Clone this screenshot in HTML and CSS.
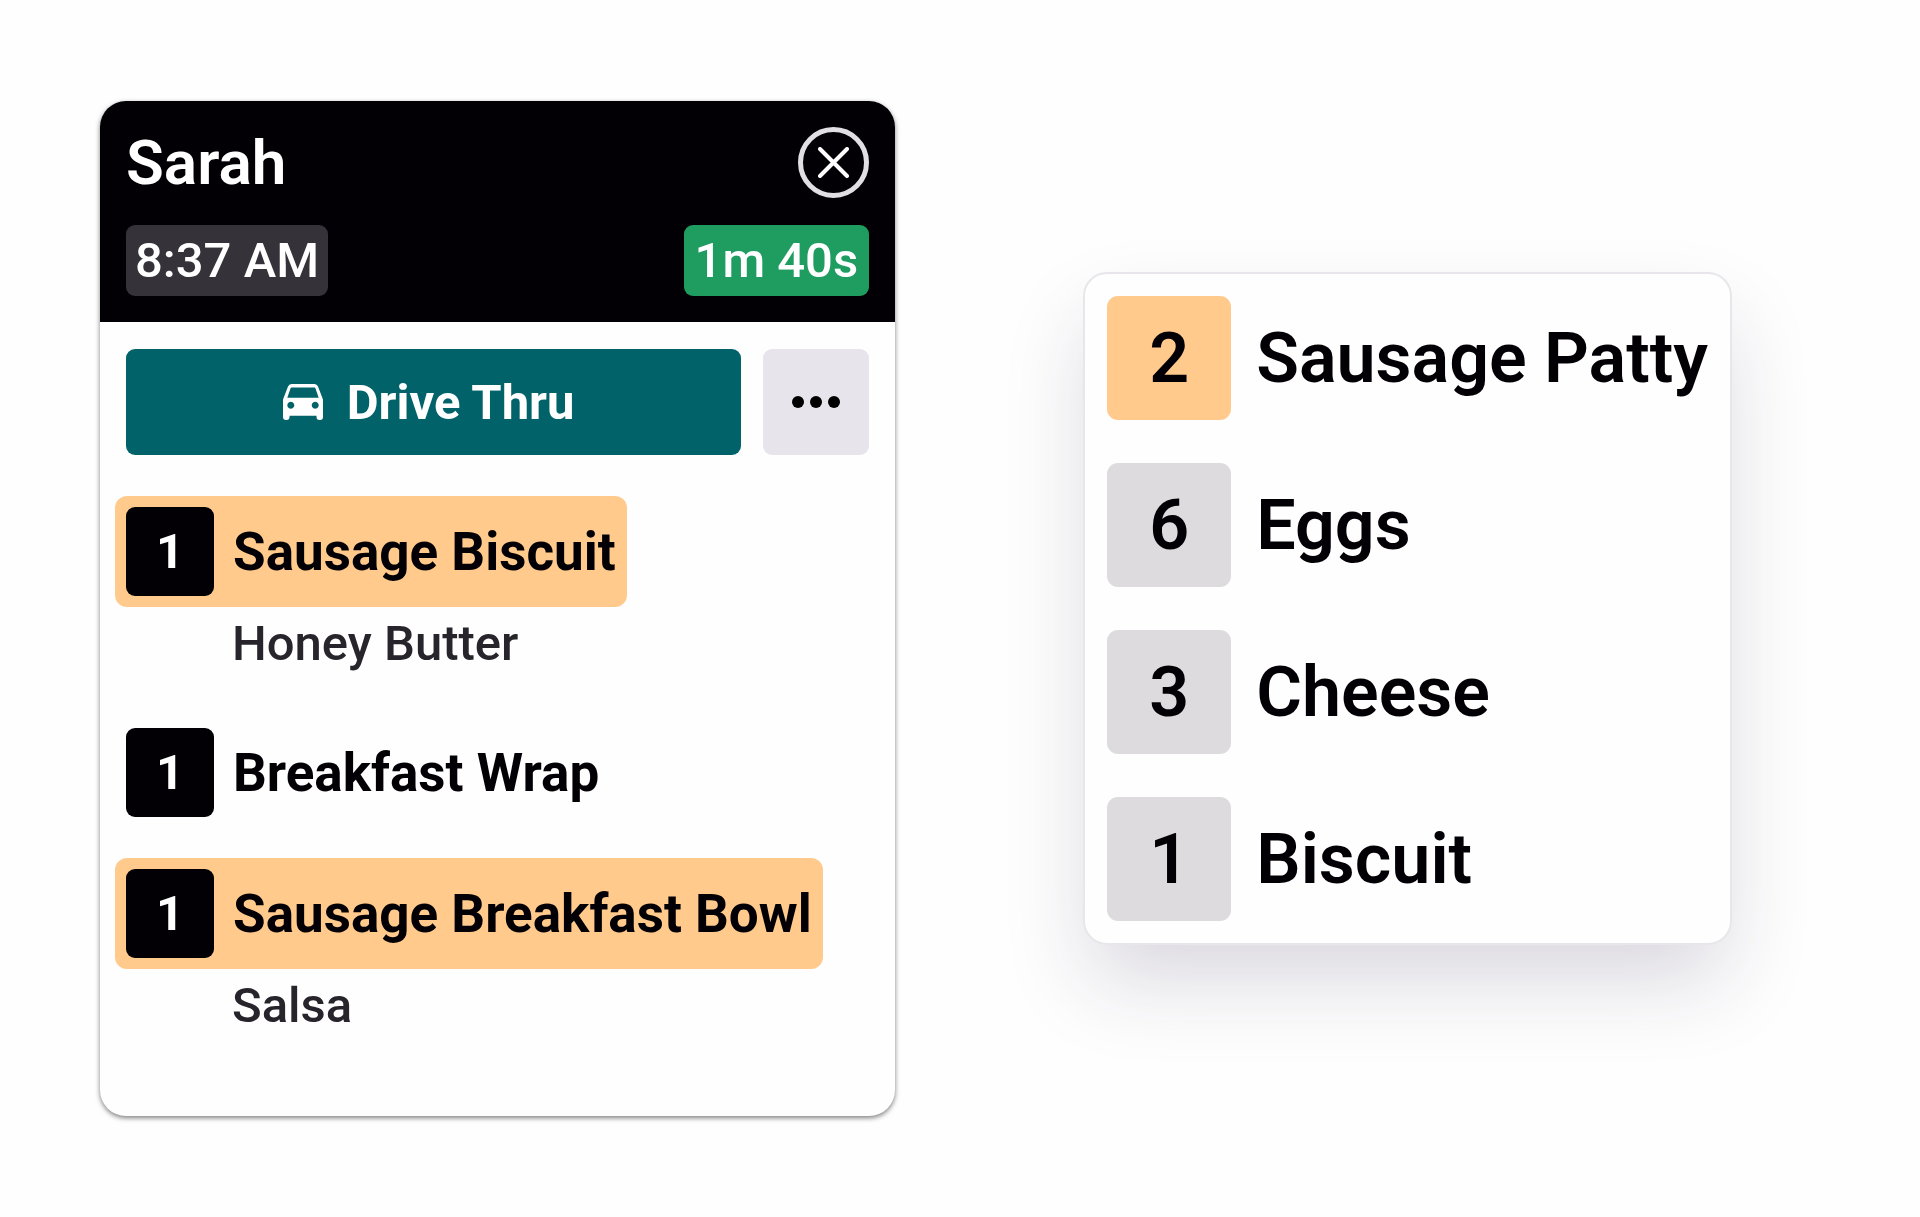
FILE: index.html
```html
<!DOCTYPE html>
<html lang="en">
<head>
    <meta charset="UTF-8">
    <meta name="viewport" content="width=device-width, initial-scale=1.0">
    <title>Kitchen Display</title>
    <link rel="stylesheet" href="styles.css">
</head>
<body>

    <article class="order">
        <header class="order-header">
            <div class="header-row">
                <h1 class="customer">Sarah</h1>
                <button class="close-button" aria-label="Close order">
                    <svg width="31" height="31" viewBox="0 0 31 31">
                        <path d="M2 2 L29 29 M29 2 L2 29" fill="none" stroke="#fff" stroke-width="4" stroke-linecap="round"/>
                    </svg>
                </button>
            </div>
            <div class="header-row">
                <time class="badge">8:37 AM</time>
                <span class="badge timer">1m 40s</span>
            </div>
        </header>

        <div class="actions">
            <button class="type-button">
                <svg width="40" height="36" viewBox="0 0 40 36">
                    <path fill="#fff" fill-rule="evenodd" d="M8.5 0 H31.5 Q34 0 35 2.5 L39.6 14.5 Q40 15.5 40 16.5 V33 A3 3 0 0 1 37 36 H36.5 A3 3 0 0 1 33.5 33 V31.7 H6.5 V33 A3 3 0 0 1 3.5 36 H3 A3 3 0 0 1 0 33 V16.5 Q0 15.5 0.4 14.5 L5 2.5 Q6 0 8.5 0 Z M8.6 3.6 Q7.8 3.6 7.5 4.4 L4.3 13.7 H35.7 L32.5 4.4 Q32.2 3.6 31.4 3.6 Z M7.8 17.8 a3.5 3.5 0 1 0 0.01 0 Z M32.2 17.8 a3.5 3.5 0 1 0 0.01 0 Z"/>
                </svg>
                Drive Thru
            </button>
            <button class="more-button" aria-label="More options">
                <svg width="48" height="12" viewBox="0 0 48 12">
                    <circle cx="6" cy="6" r="6"/>
                    <circle cx="24" cy="6" r="6"/>
                    <circle cx="42" cy="6" r="6"/>
                </svg>
            </button>
        </div>

        <ul class="items">
            <li>
                <div class="item highlight">
                    <span class="count">1</span>
                    <span>Sausage Biscuit</span>
                </div>
                <p class="modifier">Honey Butter</p>
            </li>
            <li>
                <div class="item">
                    <span class="count">1</span>
                    <span>Breakfast Wrap</span>
                </div>
            </li>
            <li>
                <div class="item highlight">
                    <span class="count">1</span>
                    <span>Sausage Breakfast Bowl</span>
                </div>
                <p class="modifier">Salsa</p>
            </li>
        </ul>
    </article>

    <ul class="summary">
        <li class="summary-row">
            <span class="total highlight">2</span>
            <span>Sausage Patty</span>
        </li>
        <li class="summary-row">
            <span class="total">6</span>
            <span>Eggs</span>
        </li>
        <li class="summary-row">
            <span class="total">3</span>
            <span>Cheese</span>
        </li>
        <li class="summary-row">
            <span class="total">1</span>
            <span>Biscuit</span>
        </li>
    </ul>

</body>
</html>
```

FILE: styles.css
```css
* {
    box-sizing: border-box;
}
body {
    font-family: Roboto, "Liberation Sans", sans-serif;
    display: flex;
    align-items: center;
    gap: 188px;
    min-height: 100vh;
    margin: 0;
    padding: 80px 188px 80px 100px;
    background-color: #fefefe;
    color: #020004;
}
ul {
    list-style: none;
    margin: 0;
    padding: 0;
}
button {
    display: flex;
    align-items: center;
    justify-content: center;
    padding: 0;
    border: none;
    font-family: inherit;
    cursor: pointer;
}

/* order ticket */
.order {
    flex: 1;
    padding-bottom: 67px;
    border-radius: 26px;
    background-color: #fefefe;
    box-shadow: 0 2px 5px rgba(0, 0, 0, 0.5);
    overflow: hidden;
}
.order-header {
    display: flex;
    flex-direction: column;
    gap: 27px;
    padding: 26px;
    background-color: #020004;
    color: white;
}
.header-row {
    display: flex;
    align-items: center;
    justify-content: space-between;
}
.customer {
    margin: 0;
    font-size: 62px;
    line-height: 71px;
    font-weight: 600;
}
.close-button {
    width: 71px;
    height: 71px;
    border: 5px solid #e2dfe4;
    border-radius: 50%;
    background-color: transparent;
}
.badge {
    padding: 0 9px;
    border-radius: 9px;
    background-color: #353239;
    font-size: 49px;
    line-height: 71px;
    font-weight: 500;
}
.timer {
    padding: 0 11px;
    background-color: #1f9d61;
}
.actions {
    display: flex;
    gap: 22px;
    padding: 27px 26px 41px;
}
.type-button {
    flex: 1;
    gap: 24px;
    height: 106px;
    padding-right: 10px;
    border-radius: 9px;
    background-color: #016369;
    color: white;
    font-size: 49px;
    font-weight: 700;
}
.more-button {
    width: 106px;
    height: 106px;
    border-radius: 9px;
    background-color: #e7e4eb;
}
.items {
    display: flex;
    flex-direction: column;
    gap: 30px;
    padding: 0 15px;
}
.item {
    display: flex;
    align-items: center;
    gap: 19px;
    width: fit-content;
    padding: 11px;
    border-radius: 12px;
    font-size: 53px;
    font-weight: 700;
}
.highlight {
    background-color: #ffca8c;
}
.count {
    width: 88px;
    border-radius: 9px;
    background-color: #020004;
    color: white;
    font-size: 49px;
    line-height: 89px;
    text-align: center;
}
.modifier {
    margin: 0;
    padding: 0 0 6px 117px;
    color: #27242b;
    font-size: 49px;
    line-height: 74px;
    font-weight: 500;
}

/* ingredient totals */
.summary {
    display: flex;
    flex-direction: column;
    gap: 43px;
    padding: 22px;
    border: 2px solid #e8e6ea;
    border-radius: 24px;
    background-color: #fefefe;
    box-shadow: 0 42px 84px -6px rgba(40, 30, 70, 0.17);
    font-size: 70px;
    font-weight: 600;
}
.summary-row {
    display: flex;
    align-items: center;
    gap: 25px;
}
.total {
    width: 124px;
    border-radius: 11px;
    background-color: #dedbdf;
    line-height: 124px;
    text-align: center;
}
.total.highlight {
    background-color: #ffca8c;
}
```
